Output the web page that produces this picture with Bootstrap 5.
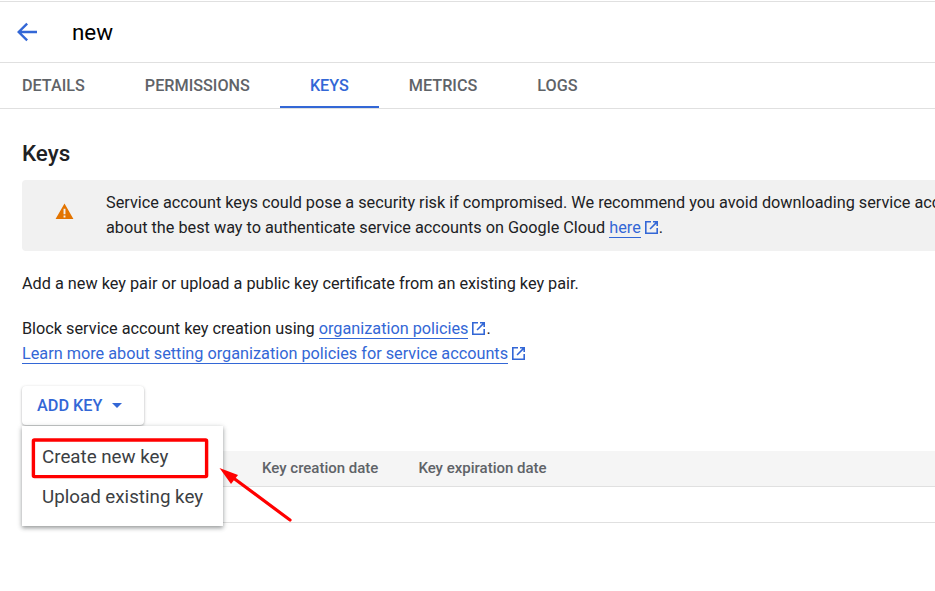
<!DOCTYPE html>
<html lang="en">
<head>
<meta charset="utf-8">
<title>Keys</title>
<link href="https://cdn.jsdelivr.net/npm/bootstrap@5.3.0/dist/css/bootstrap.min.css" rel="stylesheet">
<style>
html,body{height:591px;overflow:hidden;background:#fff}
body{font-family:Roboto,"Liberation Sans",sans-serif;color:#202124;font-size:16.25px;line-height:25px;padding-top:1px;position:relative}
.sheet-top{height:62px;border-top:1px solid #e0e0e0;border-bottom:1px solid #e0e0e0;padding-left:15px;gap:33px}
.sheet-top h1{font-size:22.4px;font-weight:400;margin:0;color:#000}
.back-ico{width:24px;height:24px;fill:#3367d6;display:block;flex:none}
.tabbar{height:46px;border-bottom:1px solid #e0e0e0;margin-left:-8px}
.tab-item{height:45px;padding:2px 30px 0;font-size:16.2px;font-weight:500;color:#5f6368;text-decoration:none;display:flex;align-items:center;border-bottom:2px solid transparent}
.tab-item.on{color:#3367d6;border-bottom-color:#3367d6}
.pagebody{padding-left:22px}
.pagebody h2{font-size:22.4px;font-weight:500;line-height:28px;margin:30px 0 13px;color:#202124}
.warnbox{height:71px;background:#f1f1f1;border-radius:4px 0 0 4px;padding-left:33px;gap:32px;overflow:hidden;white-space:nowrap}
.warn-ico{width:19px;height:19px;fill:#e37400;flex:none;margin-bottom:8px}
.warn-copy{padding-bottom:2px}
.plainp{margin:0}
.ext{color:#3367d6;text-decoration:none;border-bottom:1px solid #3367d6}
.ext-ico{width:15px;height:15px;fill:#3367d6;vertical-align:-2px;margin-left:3px}
.addbtn{width:122px;height:39px;margin-top:20px;background:#fff;border:0;border-radius:4px;box-shadow:0 1px 3px rgba(60,64,67,.3),0 1px 2px rgba(60,64,67,.15);color:#3367d6;font-size:16.25px;font-weight:500;padding:0 0 0 15px;gap:10px}
.caret-ico{width:10px;height:5px;fill:#3367d6}
.keytable{margin-top:26px}
.keyhead{height:36px;background:#f5f5f5;border-bottom:1px solid #e0e0e0;font-size:15px;font-weight:500;color:#5f6368;padding-left:240px;gap:40px}
.keyrow{height:36px;border-bottom:1px solid #e0e0e0}
.popmenu{position:absolute;left:22px;top:426px;width:201px;height:100px;background:#fff;box-shadow:0 2px 4px rgba(60,64,67,.45),0 1px 6px rgba(60,64,67,.15);padding-top:11px;font-size:18.75px;color:#3c4043}
.popitem{height:40px;padding-left:20px;display:flex;align-items:center}
.markup{position:absolute;left:0;top:0;width:935px;height:591px;pointer-events:none}
</style>
</head>
<body>
<header class="sheet-top d-flex align-items-center">
  <svg class="back-ico" viewBox="0 0 24 24"><path d="M22 10.800H6.600l6.400-6.400L11.300 2.700 2 12l9.300 9.300 1.700-1.700-6.400-6.400H22z"/></svg>
  <h1>new</h1>
</header>
<nav class="tabbar d-flex">
  <a class="tab-item" href="#">DETAILS</a>
  <a class="tab-item" href="#">PERMISSIONS</a>
  <a class="tab-item on" href="#">KEYS</a>
  <a class="tab-item" href="#">METRICS</a>
  <a class="tab-item" href="#">LOGS</a>
</nav>
<main class="pagebody">
  <h2>Keys</h2>
  <div class="warnbox d-flex align-items-center">
    <svg class="warn-ico" viewBox="0 0 20 20"><path d="M10 1.500 .6 18h18.800zM9 7h2v6H9zm0 7.200h2v2H9z" fill-rule="evenodd"/></svg>
    <div class="warn-copy">Service account keys could pose a security risk if compromised. We recommend you avoid downloading service account keys<br>about the best way to authenticate service accounts on Google Cloud <a class="ext" href="#">here</a><svg class="ext-ico" viewBox="0 0 15 15"><path d="M1 1h6v1.600H2.600v9.800h9.800V8H14v6H1zM9 1h5v5h-1.600V3.700L6.600 9.500 5.500 8.400l5.800-5.800H9z"/></svg>.</div>
  </div>
  <p class="plainp mt-3 pt-1">Add a new key pair or upload a public key certificate from an existing key pair.</p>
  <p class="plainp mt-3 pt-1">Block service account key creation using <a class="ext" href="#">organization policies</a><svg class="ext-ico" viewBox="0 0 15 15"><path d="M1 1h6v1.600H2.600v9.800h9.800V8H14v6H1zM9 1h5v5h-1.600V3.700L6.600 9.500 5.500 8.400l5.800-5.800H9z"/></svg>.<br>
  <a class="ext" href="#">Learn more about setting organization policies for service accounts</a><svg class="ext-ico" viewBox="0 0 15 15"><path d="M1 1h6v1.600H2.600v9.800h9.800V8H14v6H1zM9 1h5v5h-1.600V3.700L6.600 9.500 5.500 8.400l5.800-5.800H9z"/></svg></p>
  <button class="addbtn d-flex align-items-center" type="button">ADD KEY <svg class="caret-ico" viewBox="0 0 10 5"><path d="M0 0h10L5 5z"/></svg></button>
  <div class="keytable">
    <div class="keyhead d-flex align-items-center"><span>Key creation date</span><span>Key expiration date</span></div>
    <div class="keyrow"></div>
  </div>
</main>
<div class="popmenu">
  <div class="popitem">Create new key</div>
  <div class="popitem">Upload existing key</div>
</div>
<svg class="markup" viewBox="0 0 935 591">
  <rect x="33.400" y="440" width="173.200" height="36.600" fill="none" stroke="#f00" stroke-width="3.400" rx="1"/>
  <path d="M290 520 232 477" stroke="#f00" stroke-width="3.200" stroke-linecap="round" fill="none"/>
  <path d="M219.500 468 238 475 231 484z" fill="#f00"/>
</svg>
</body>
</html>
